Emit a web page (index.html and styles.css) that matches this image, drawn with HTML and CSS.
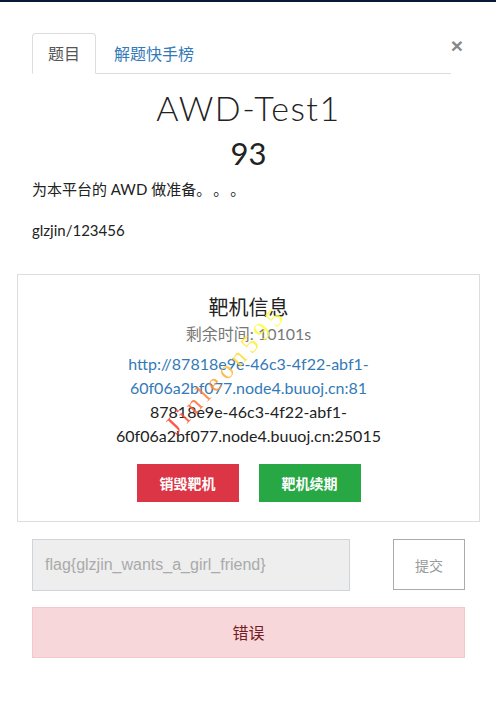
FILE: index.html
```html
<!DOCTYPE html>
<html lang="zh-CN">
<head>
<meta charset="utf-8">
<title>AWD-Test1</title>
<link rel="stylesheet" href="styles.css">
</head>
<body>
<div class="topbar"></div>
<div class="modal">
  <div class="modal-head">
    <ul class="tabs">
      <li class="tab active">题目</li>
      <li class="tab"><a href="#">解题快手榜</a></li>
    </ul>
    <button class="close" aria-label="close">&times;</button>
  </div>
  <h2 class="title">AWD-Test1</h2>
  <h3 class="value">93</h3>
  <p class="desc">为本平台的 AWD 做准备<span class="dots">。。。</span></p>
  <p class="desc cred">glzjin/123456</p>

  <div class="box">
    <h4 class="box-title">靶机信息</h4>
    <div class="remain">剩余时间: 10101s</div>
    <a class="link" href="#">http://87818e9e-46c3-4f22-abf1-<br>60f06a2bf077.node4.buuoj.cn:81</a>
    <div class="host">87818e9e-46c3-4f22-abf1-<br>60f06a2bf077.node4.buuoj.cn:25015</div>
    <div class="actions">
      <button class="btn btn-red">销毁靶机</button>
      <button class="btn btn-green">靶机续期</button>
    </div>
    <span class="watermark">Jinleon595</span>
  </div>

  <div class="submit-row">
    <input class="flag" type="text" value="flag{glzjin_wants_a_girl_friend}" readonly>
    <button class="submit">提交</button>
  </div>
  <div class="alert">错误</div>
</div>
</body>
</html>
```
FILE: styles.css
```css
* { box-sizing: border-box; }
html, body { margin: 0; padding: 0; background: #fff; }
body {
  font-family: Lato, "Noto Sans CJK SC", sans-serif;
  color: #212529;
  font-size: 16px;
  width: 496px;
  text-spacing-trim: space-all;
}
.topbar { height: 2px; background: #0b1736; }
.modal { padding: 31px 16px 0 17px; }
.modal-head {
  display: flex;
  align-items: flex-start;
  padding: 0 15px;
}
.tabs {
  list-style: none;
  margin: 0;
  padding: 0;
  display: flex;
  width: 420px;
  border-bottom: 1px solid #dddddd;
}
.tab {
  height: 41px;
  padding: 0 15px;
  margin-right: 2px;
  margin-bottom: -1px;
  border: 1px solid transparent;
  border-radius: 4px 4px 0 0;
  font-family: "Noto Sans CJK SC", sans-serif;
  font-size: 16px;
  line-height: 39px;
  color: #555;
}
.tab.active {
  border-color: #dddddd #dddddd transparent;
  background: #fff;
}
.tab a { color: #337ab7; text-decoration: none; }
.close {
  margin-left: auto;
  margin-top: 3px;
  margin-right: 2px;
  border: 0;
  background: none;
  padding: 0;
  font-family: "Liberation Sans", sans-serif;
  font-size: 21px;
  font-weight: 700;
  line-height: 20px;
  color: #888;
}
.title {
  margin: 12px 0 0;
  text-align: center;
  font-family: Lato, sans-serif;
  font-weight: 300;
  font-size: 34px;
  letter-spacing: 1.5px;
  line-height: 44px;
  color: #222;
}
.value {
  margin: 3px 0 0;
  text-align: center;
  font-family: Lato, sans-serif;
  font-weight: 400;
  font-size: 31px;
  line-height: 40px;
  color: #222;
}
.desc {
  margin: 4px 0 0;
  padding: 0 15px;
  font-size: 15px;
  line-height: 24px;
  color: #222;
}
.dots {
  font-family: "Noto Sans CJK SC", sans-serif;
  letter-spacing: 2px;
  text-spacing-trim: space-all;
}
.desc.cred { margin-top: 17px; }
.box {
  position: relative;
  margin-top: 32px;
  border: 1px solid #dddddd;
  padding: 17px 0 19px;
  text-align: center;
  overflow: hidden;
}
.box-title {
  margin: 0;
  font-size: 20px;
  font-weight: 400;
  line-height: 30px;
  color: #222;
}
.remain { line-height: 24px; color: #777; font-size: 16px; }
.link {
  display: block;
  margin-top: 6px;
  line-height: 24px;
  color: #337ab7;
  text-decoration: none;
}
.host { line-height: 24px; color: #222; }
.actions {
  margin-top: 16px;
  display: flex;
  justify-content: center;
  gap: 20px;
}
.btn {
  width: 102px;
  height: 38px;
  border: 0;
  border-radius: 0;
  color: #fff;
  font-family: "Noto Sans CJK SC", sans-serif;
  font-weight: 700;
  font-size: 14px;
}
.btn-red { background: #dc3545; }
.btn-green { background: #28a745; }
.watermark {
  position: absolute;
  left: 143px;
  top: 146px;
  transform-origin: 0 0;
  transform: rotate(-47deg);
  font-family: "Liberation Serif", serif;
  font-size: 26px;
  line-height: 26px;
  letter-spacing: 5px;
  white-space: nowrap;
  background: linear-gradient(90deg, #ff3030 0%, #ff8a30 35%, #ffd830 60%, #ffff30 85%);
  -webkit-background-clip: text;
  background-clip: text;
  color: transparent;
  opacity: 0.85;
  pointer-events: none;
}
.submit-row {
  margin-top: 17px;
  padding: 0 15px;
  display: flex;
  justify-content: space-between;
  align-items: flex-start;
}
.flag {
  width: 318px;
  height: 52px;
  border: 1px solid #ced4da;
  background: #eeeeee;
  padding: 0 12px;
  font-family: "Liberation Sans", sans-serif;
  font-size: 16px;
  color: #aaaaaa;
  outline: none;
}
.submit {
  width: 72px;
  height: 51px;
  border: 1px solid #a9abad;
  background: #fff;
  font-family: "Noto Sans CJK SC", sans-serif;
  font-size: 14px;
  color: #999;
}
.alert {
  margin: 16px 15px 0;
  height: 51px;
  border: 1px solid #f5c6cb;
  background: #f8d7da;
  color: #721c24;
  text-align: center;
  line-height: 49px;
  font-family: "Noto Sans CJK SC", sans-serif;
  font-size: 16px;
}
```
